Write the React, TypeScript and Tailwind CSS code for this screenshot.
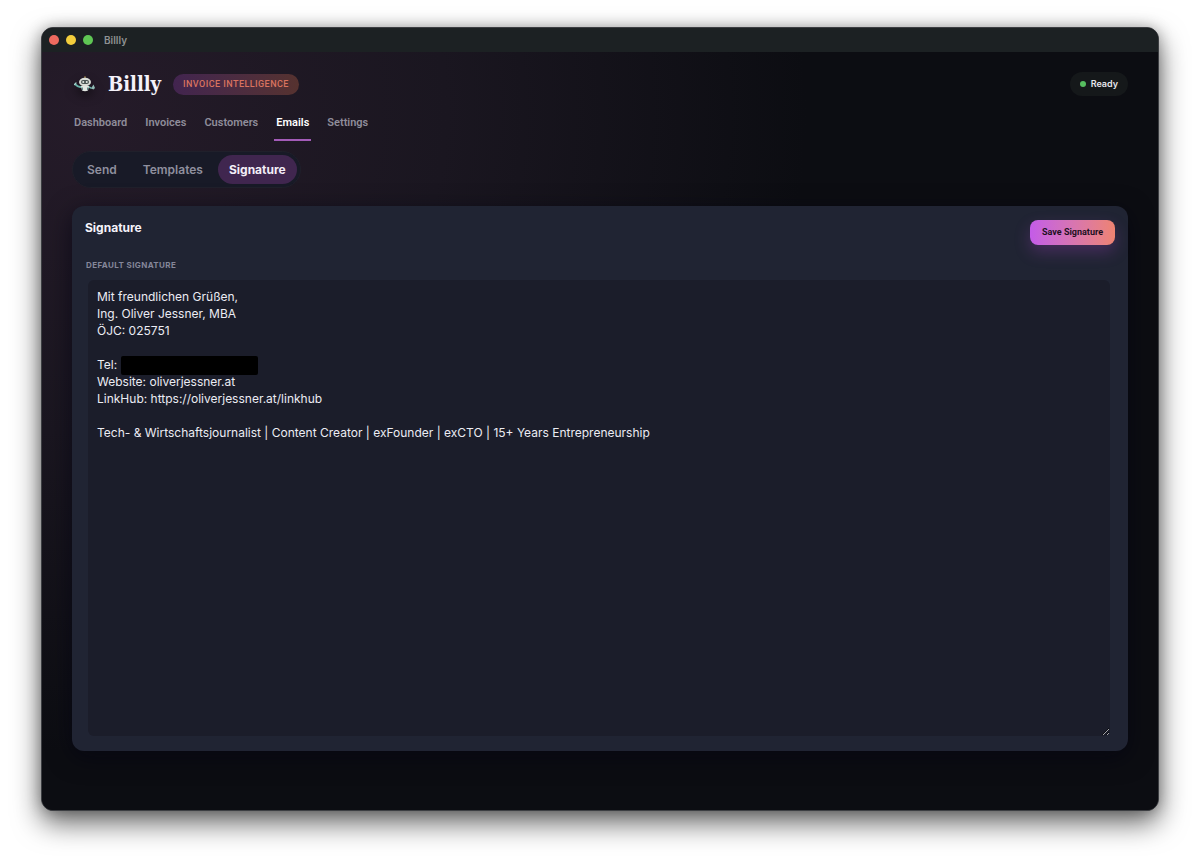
import { useState } from "react";

const navItems = ["Dashboard", "Invoices", "Customers", "Emails", "Settings"];
const emailTabs = ["Send", "Templates", "Signature"];

const defaultSignature = `Mit freundlichen Grüßen,
Ing. Oliver Jessner, MBA
ÖJC: 025751

Tel:
Website: oliverjessner.at
LinkHub: https://oliverjessner.at/linkhub

Tech- & Wirtschaftsjournalist | Content Creator | exFounder | exCTO | 15+ Years Entrepreneurship`;

function TitleBar() {
  return (
    <div className="flex h-6 shrink-0 items-center bg-[#1c2123] pl-[7px]">
      <div className="flex gap-[7px]">
        <button type="button" aria-label="Close" className="size-[10px] rounded-full bg-[#ee6a5f]" />
        <button type="button" aria-label="Minimize" className="size-[10px] rounded-full bg-[#f3ce3c]" />
        <button type="button" aria-label="Zoom" className="size-[10px] rounded-full bg-[#5fc754]" />
      </div>
      <span className="ml-[11px] text-[10px] font-semibold text-[#8e9192]">Billly</span>
    </div>
  );
}

function RobotLogo() {
  return (
    <svg
      viewBox="0 0 44 32"
      className="h-4 w-[22px] drop-shadow-[0_5px_5px_rgba(0,0,0,0.5)]"
      aria-hidden="true"
    >
      <path d="M22 6V2" stroke="#5d8a65" strokeWidth="2" />
      <circle cx="22" cy="2" r="1.7" fill="#b08a4a" />
      <path d="M16 21 C11 24 7 21 3 17" fill="none" stroke="#69b3a9" strokeWidth="3.6" strokeLinecap="round" />
      <path d="M1 17 L4 14" stroke="#a8d4cd" strokeWidth="2.4" strokeLinecap="round" />
      <path d="M28 21 L34 24" stroke="#69b3a9" strokeWidth="3" strokeLinecap="round" />
      <path d="M34 25 L39 17 L42 24 L39 27 Z" fill="#8fb9b4" />
      <path d="M14 20 H30 L28 29 Q22 32 16 29 Z" fill="#e3e9e4" />
      <path d="M17 23 V28 M27 23 V28" stroke="#5f8f8c" strokeWidth="2" />
      <ellipse cx="22" cy="12" rx="12" ry="8.5" fill="#d9ded7" />
      <rect x="14" y="8" width="16" height="8" rx="4" fill="#4a5554" />
      <circle cx="18.5" cy="12" r="2" fill="#e5ece6" />
      <circle cx="25.5" cy="12" r="2" fill="#e5ece6" />
    </svg>
  );
}

function Header() {
  return (
    <header className="flex items-center justify-between">
      <div className="flex items-center pl-[2px]">
        <RobotLogo />
        <h1 className="ml-3 font-['DejaVu_Serif_Condensed','DejaVu_Serif',serif] text-xl leading-6 font-bold text-[#f5f2fa]">
          Billly
        </h1>
        <span className="ml-3 rounded-full bg-linear-to-r from-[#42244f] to-[#56322f] px-[10px] font-[Roboto,sans-serif] text-[9px] leading-[21px] font-medium tracking-wider text-[#d9735f]">
          INVOICE INTELLIGENCE
        </span>
      </div>
      <div className="flex items-center gap-[5px] rounded-full bg-[#15181a] px-[10px] text-[9px] leading-6 font-semibold text-[#e6e6ec]">
        <span className="size-[6px] rounded-full bg-[#56bd5f]" />
        Ready
      </div>
    </header>
  );
}

export default function App() {
  const [page, setPage] = useState("Emails");
  const [tab, setTab] = useState("Signature");
  const [signature, setSignature] = useState(defaultSignature);

  return (
    <div className="flex min-h-screen flex-col bg-white px-[41px] pt-[27px] pb-[55px] font-[Inter,sans-serif]">
      <div className="flex flex-1 flex-col overflow-hidden rounded-xl border border-[#3c3e42] bg-[#0c0d12] shadow-[0_12px_28px_rgba(0,0,0,0.6),0_0_14px_rgba(0,0,0,0.25)]">
        <TitleBar />
        <div className="flex flex-1 flex-col bg-[radial-gradient(ellipse_720px_640px_at_4%_8%,#251b29_0%,#1a1620_50%,#0c0d12_100%)] px-[30px] pt-5 pb-[59px]">
          <Header />

          <nav className="flex gap-[14px] pt-4 font-[Roboto,sans-serif]" aria-label="Main">
            {navItems.map((item) => (
              <a
                key={item}
                href={`#${item.toLowerCase()}`}
                aria-current={page === item ? "page" : undefined}
                onClick={() => setPage(item)}
                className={`border-b-2 px-[2px] pt-[3px] pb-2 text-[11px] leading-4 font-semibold ${
                  page === item ? "border-[#a35bb8] text-white" : "border-transparent text-[#8f8d9a]"
                }`}
              >
                {item}
              </a>
            ))}
          </nav>

          <div
            role="tablist"
            className="mt-[10px] flex gap-1 self-start rounded-full border border-[#20202b] bg-[#181a27] p-[3px]"
          >
            {emailTabs.map((item) => (
              <button
                key={item}
                type="button"
                role="tab"
                aria-selected={tab === item}
                onClick={() => setTab(item)}
                className={`rounded-full px-[11px] text-xs leading-[29px] ${
                  tab === item ? "bg-[#40264f] font-bold text-[#f3eef8]" : "font-semibold text-[#8f8f9e]"
                }`}
              >
                {item}
              </button>
            ))}
          </div>

          <main className="mt-[18px] flex flex-1 flex-col rounded-xl bg-[#202433] px-[13px] pt-[14px] pb-[15px] shadow-[0_6px_24px_rgba(3,4,16,0.6)]">
            <div className="flex items-start justify-between">
              <h2 className="text-xs leading-4 font-bold text-[#f5f3fa]">Signature</h2>
              <button
                type="button"
                className="rounded-lg bg-linear-to-r from-[#c45be8] to-[#ee8370] px-3 font-[Roboto,sans-serif] text-[9px] leading-[25px] font-bold text-[#20101f] shadow-[0_7px_16px_rgba(168,70,200,0.28)]"
              >
                Save Signature
              </button>
            </div>
            <label
              htmlFor="signature"
              className="mt-[14px] ml-[1px] text-[8px] leading-3 font-bold tracking-wider text-[#85879a]"
            >
              DEFAULT SIGNATURE
            </label>
            <div className="relative mt-[9px] mr-[5px] ml-[3px] flex flex-1">
              <textarea
                id="signature"
                spellCheck={false}
                value={signature}
                onChange={(event) => setSignature(event.target.value)}
                className="w-full flex-1 resize rounded-md bg-[#1b1d2a] px-[9px] py-2 text-xs leading-[17px] text-[#ececf3] outline-none"
              />
              <span className="absolute top-[76px] left-[33px] h-[19px] w-[137px] rounded-xs bg-black" />
            </div>
          </main>
        </div>
      </div>
    </div>
  );
}
